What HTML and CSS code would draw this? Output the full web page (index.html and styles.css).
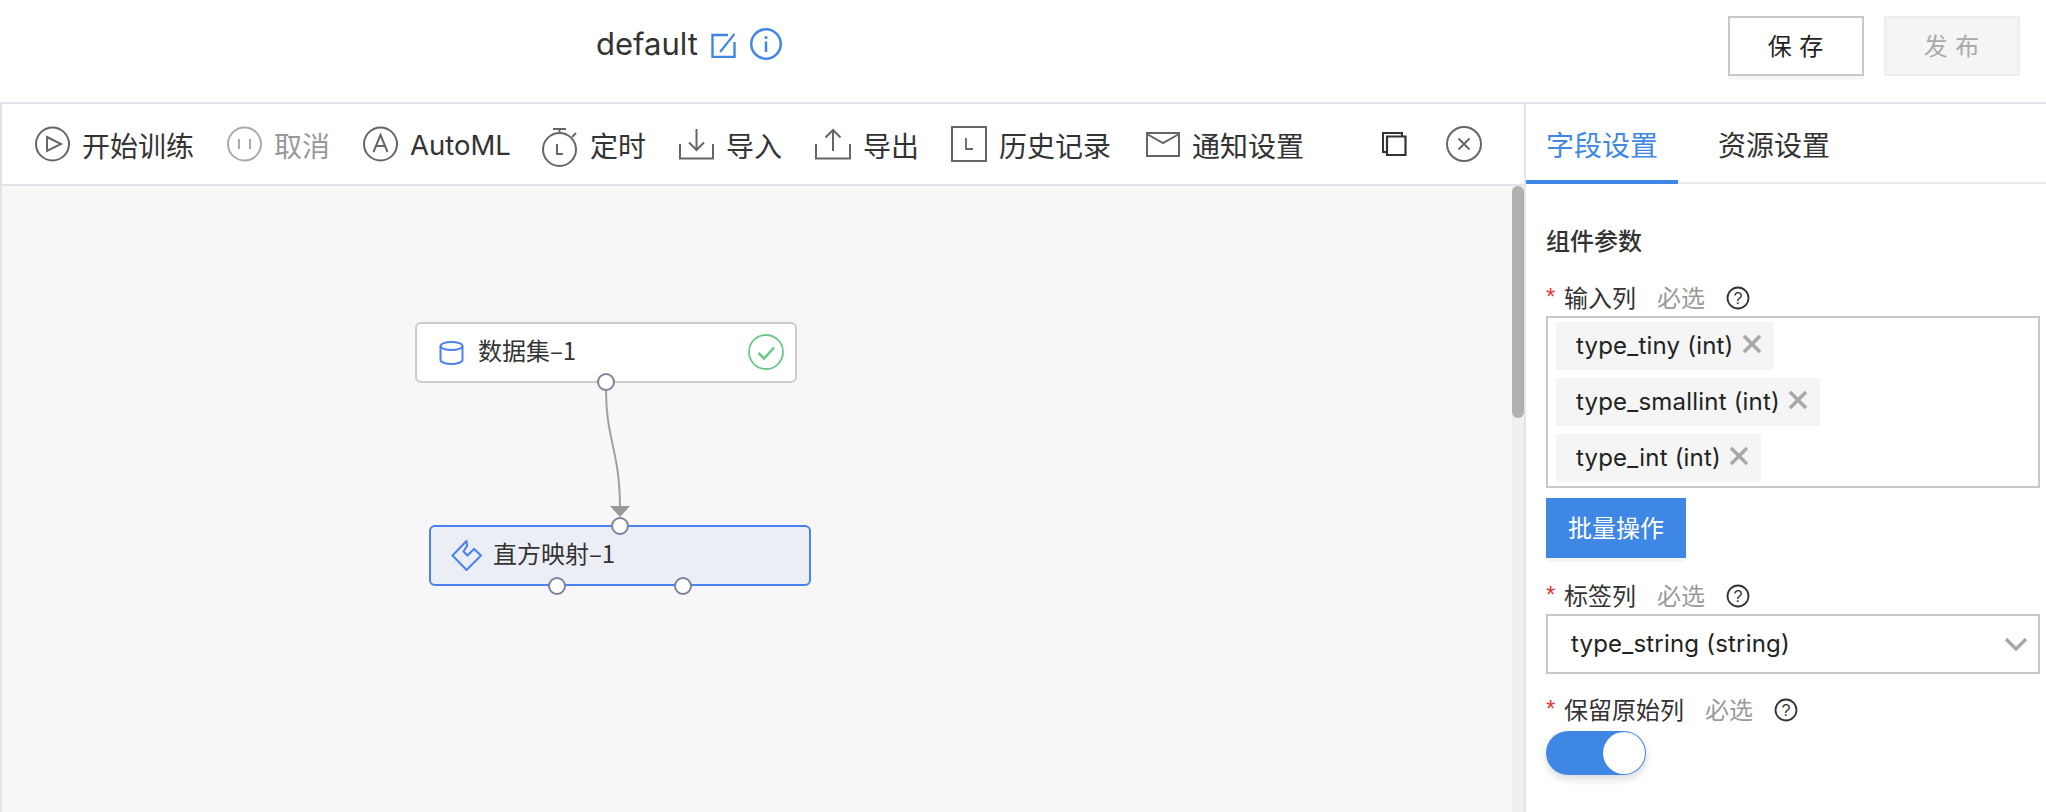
FILE: index.html
```html
<!DOCTYPE html>
<html lang="zh">
<head>
<meta charset="utf-8">
<title>default</title>
<link rel="stylesheet" href="styles.css">
</head>
<body>
<div class="page">
  <header class="header">
    <div class="title-block">
      <span class="title">default</span>
      <svg class="edit-icon" viewBox="0 0 25 25" width="25" height="25"><path d="M17 2H1.500v22h22V9" fill="none" stroke="#3f87e4" stroke-width="2.400"/><path d="M23.500 1L9 19" fill="none" stroke="#3f87e4" stroke-width="2"/></svg>
      <svg class="info-icon" viewBox="0 0 32 32" width="32" height="32"><circle cx="16" cy="16" r="14.75" fill="none" stroke="#3f87e4" stroke-width="2.5"/><circle cx="16" cy="9.5" r="1.6" fill="#3f87e4"/><path d="M16 13.5V24" stroke="#3f87e4" stroke-width="2.5"/></svg>
    </div>
    <div class="header-actions">
      <button class="btn btn-save">保 存</button>
      <button class="btn btn-publish">发 布</button>
    </div>
  </header>
  <div class="main">
    <section class="workspace">
      <div class="toolbar">
        <div class="tool">
          <svg width="35" height="36" viewBox="0 0 35 36"><circle cx="17.5" cy="18" r="16.5" class="ic"/><path d="M12 11l14 7-14 7z" class="ic"/></svg>
          <span>开始训练</span>
        </div>
        <div class="tool tool-off">
          <svg width="35" height="36" viewBox="0 0 35 36"><circle cx="17.5" cy="18" r="16.5" class="ic"/><path d="M12 13v10M23 13v10" class="ic"/></svg>
          <span>取消</span>
        </div>
        <div class="tool tool-latin">
          <svg width="35" height="36" viewBox="0 0 35 36"><circle cx="17.5" cy="18" r="16.5" class="ic"/><path d="M10.5 26L17.500 9l7 17M13 20h9" class="ic"/></svg>
          <span class="latin">AutoML</span>
        </div>
        <div class="tool">
          <svg class="tall" width="36" height="39" viewBox="0 0 36 39"><circle cx="17.500" cy="21.500" r="16.500" class="ic"/><path d="M11 1h13M17.500 1v4M30 9l4-4M15 16v10h6" class="ic"/></svg>
          <span>定时</span>
        </div>
        <div class="tool">
          <svg width="35" height="32" viewBox="0 0 35 32"><path d="M1 16v14.500h33V16M17.500 1v21M10 14.500l7.500 7.500 7.500-7.500" class="ic"/></svg>
          <span>导入</span>
        </div>
        <div class="tool tool-export">
          <svg width="36" height="32" viewBox="0 0 36 32"><path d="M1 16v14.500h34V16M18 23V2M10.500 9.500L18 2l7.500 7.500" class="ic"/></svg>
          <span>导出</span>
        </div>
        <div class="tool">
          <svg width="36" height="36" viewBox="0 0 36 36"><path d="M1 1h34v34H1z" class="ic"/><path d="M15 12v11h7" class="ic thin"/></svg>
          <span>历史记录</span>
        </div>
        <div class="tool tool-mail">
          <svg width="34" height="25" viewBox="0 0 34 25"><path d="M1 1h32v23H1zM1 2l16 9 16-9" class="ic"/></svg>
          <span>通知设置</span>
        </div>
        <div class="tool-right">
          <svg width="25" height="24" viewBox="0 0 25 24"><path d="M4 20H1V1h19v3" fill="none" stroke="#333" stroke-width="2"/><path d="M5 4.500h18.500V23H5z" fill="none" stroke="#333" stroke-width="2.200"/></svg>
          <svg class="close-icon" width="36" height="36" viewBox="0 0 36 36"><circle cx="18" cy="18" r="17" class="ic"/><path d="M12.500 12.500l11 11M23.500 12.500l-11 11" class="ic"/></svg>
        </div>
      </div>
      <div class="canvas">
        <div class="node node-data">
          <svg width="25" height="24" viewBox="0 0 25 24"><ellipse cx="12.500" cy="5" rx="11" ry="4" fill="none" stroke="#4a80f0" stroke-width="2"/><path d="M1.500 5v14c0 2 5 4 11 4s11-2 11-4V5" fill="none" stroke="#4a80f0" stroke-width="2"/></svg>
          <span class="node-label">数据集–1</span>
          <svg class="node-check" width="36" height="36" viewBox="0 0 36 36"><circle cx="18" cy="18" r="17" fill="none" stroke="#6cc887" stroke-width="1.800"/><path d="M10.500 19l5.500 5.500 10-11" fill="none" stroke="#6cc887" stroke-width="2.600"/></svg>
        </div>
        <div class="node node-hist">
          <svg width="31" height="31" viewBox="0 0 31 31"><path d="M15.500 1L1.500 15.500 15.500 30 30 15.500 23 9l-6.500 6.500-4-4L16 6z" fill="none" stroke="#4a80f0" stroke-width="2"/></svg>
          <span class="node-label">直方映射–1</span>
        </div>
        <svg class="edge" width="60" height="140" viewBox="0 0 60 140"><path d="M10 10C10 60 24 70 24 129" fill="none" stroke="#a0a0a0" stroke-width="2"/><path d="M14 126h20l-10 11z" fill="#999"/></svg>
        <span class="port port-a"></span>
        <span class="port port-b"></span>
        <span class="port port-c"></span>
        <span class="port port-d"></span>
        <div class="scrollbar"><div class="scroll-thumb"></div></div>
      </div>
    </section>
    <aside class="panel">
      <div class="tabs">
        <div class="tab tab-active">字段设置</div>
        <div class="tab">资源设置</div>
      </div>
      <div class="form">
        <h3 class="form-title">组件参数</h3>
        <div class="label"><i>*</i><span>输入列</span><em>必选</em><svg class="help" width="24" height="24" viewBox="0 0 24 24"><circle cx="12" cy="12" r="10.500" fill="none" stroke="#333" stroke-width="1.800"/><text x="12" y="17.500" text-anchor="middle" class="help-q">?</text></svg></div>
        <div class="multi">
          <div class="tag"><span>type_tiny (int)</span><svg width="20" height="20" viewBox="0 0 20 20"><path d="M2 2l16 16M18 2L2 18" stroke="#a9a9a9" stroke-width="3.500"/></svg></div>
          <div class="tag"><span>type_smallint (int)</span><svg width="20" height="20" viewBox="0 0 20 20"><path d="M2 2l16 16M18 2L2 18" stroke="#a9a9a9" stroke-width="3.500"/></svg></div>
          <div class="tag"><span>type_int (int)</span><svg width="20" height="20" viewBox="0 0 20 20"><path d="M2 2l16 16M18 2L2 18" stroke="#a9a9a9" stroke-width="3.500"/></svg></div>
        </div>
        <button class="btn-batch">批量操作</button>
        <div class="label label-second"><i>*</i><span>标签列</span><em>必选</em><svg class="help" width="24" height="24" viewBox="0 0 24 24"><circle cx="12" cy="12" r="10.500" fill="none" stroke="#333" stroke-width="1.800"/><text x="12" y="17.500" text-anchor="middle" class="help-q">?</text></svg></div>
        <div class="select"><span>type_string (string)</span><svg width="24" height="14" viewBox="0 0 24 14"><path d="M2 2l10 10L22 2" fill="none" stroke="#a9a9a9" stroke-width="3.500"/></svg></div>
        <div class="label label-third"><i>*</i><span>保留原始列</span><em>必选</em><svg class="help" width="24" height="24" viewBox="0 0 24 24"><circle cx="12" cy="12" r="10.500" fill="none" stroke="#333" stroke-width="1.800"/><text x="12" y="17.500" text-anchor="middle" class="help-q">?</text></svg></div>
        <div class="switch"><div class="knob"></div></div>
      </div>
    </aside>
  </div>
</div>
</body>
</html>
```
FILE: styles.css
```css
* { box-sizing: border-box; }
html, body { margin: 0; height: 100%; overflow: hidden; background: #fff; }
body { font-family: "Inter", "Noto Sans CJK SC", sans-serif; color: #333; }
.page { width: 2046px; height: 812px; display: flex; flex-direction: column; }

.header { height: 104px; border-bottom: 2px solid #e3e4ea; display: flex; align-items: flex-start; justify-content: space-between; padding: 16px 26px 0 596px; }
.title-block { display: flex; align-items: center; height: 56px; }
.title { font-size: 31px; color: #333; line-height: 56px; }
.edit-icon { margin-left: 13px; margin-top: 2px; }
.info-icon { margin-left: 14px; }
.header-actions { display: flex; gap: 20px; }
.btn { width: 136px; height: 60px; font: 24px/1 "Noto Sans CJK SC", sans-serif; letter-spacing: 1px; padding: 0 0 2px; border: 2px solid #c8c8c8; background: #fff; color: #222; }
.btn-save { box-shadow: 0 4px 0 #f7f7f7; }
.btn-publish { background: #f5f5f5; border-color: #eee; color: #aaa; }

.main { flex: 1; display: flex; min-height: 0; }
.workspace { width: 1524px; display: flex; flex-direction: column; border-left: 2px solid #e3e4ea; }
.toolbar { height: 82px; flex: none; border-bottom: 2px solid #e3e4ea; display: flex; align-items: center; padding-left: 33px; }
.tool { display: flex; align-items: center; gap: 12px; margin-right: 33px; font-size: 28px; font-family: "Noto Sans CJK SC", sans-serif; color: #333; line-height: 40px; }
.tool span { margin-top: 2px; }
.tool svg { flex: none; }
.tool-off { color: #999; }
.tool-off .ic { stroke: #aaa; }
.tool-latin { margin-right: 31px; }
.tool-export { margin-right: 32px; }
.tool-mail { margin-right: 0; margin-left: 2px; }
.latin { font-family: "Inter", sans-serif; font-size: 27.5px; }
.ic { fill: none; stroke: #666; stroke-width: 2; }
.ic.thin { stroke-width: 1.800; }
.tall { margin-top: 6px; }
.tool-right { margin-left: auto; display: flex; align-items: center; gap: 39px; padding-right: 42px; }

.canvas { flex: 1; position: relative; background: #f7f7f7; overflow: hidden; }
.node { position: absolute; height: 61px; width: 382px; border-radius: 6px; display: flex; align-items: center; font-size: 24px; color: #333; font-family: "Noto Sans CJK SC", sans-serif; }
.node-data { left: 413px; top: 136px; background: #fff; border: 2px solid #ccc; padding-left: 22px; }
.node-hist { left: 427px; top: 339px; background: #eceef6; border: 2px solid #4a80f0; padding-left: 20px; }
.node-label { margin-left: 14px; margin-top: -6px; }
.node-hist .node-label { margin-left: 11px; }
.node-check { position: absolute; right: 11px; top: 10px; }
.edge { position: absolute; left: 594px; top: 194px; }
.port { position: absolute; width: 18px; height: 18px; border-radius: 50%; background: #fff; border: 2px solid #7c8499; }
.port-a { left: 595px; top: 187px; }
.port-b { left: 609px; top: 331px; }
.port-c { left: 546px; top: 391px; }
.port-d { left: 672px; top: 391px; }
.scrollbar { position: absolute; right: 0; top: 0; bottom: 0; width: 12px; background: #efefef; }
.scroll-thumb { height: 232px; background: #b0b0b0; border-radius: 6px; }

.panel { width: 522px; border-left: 2px solid #e3e4ea; display: flex; flex-direction: column; }
.tabs { height: 80px; display: flex; border-bottom: 2px solid #e8e8e8; flex: none; }
.tab { width: 152px; height: 80px; line-height: 80px; text-align: center; font-size: 28px; font-family: "Noto Sans CJK SC", sans-serif; color: #333; margin-right: 21px; }
.tab + .tab { margin-right: 0; width: 150px; }
.tab-active { color: #3f87e4; border-bottom: 4px solid #3f87e4; }
.form { padding: 38px 6px 0 20px; font-family: "Noto Sans CJK SC", sans-serif; }
.form-title { margin: 0; font-size: 24px; font-weight: 500; line-height: 36px; color: #333; }
.label { display: flex; align-items: center; height: 34px; font-size: 24px; margin-top: 22px; color: #333; }
.label span, .label em { margin-top: -2px; }
.label i { color: #e5383b; font-style: normal; width: 18px; font-size: 24px; font-family: "Liberation Sans", sans-serif; margin-top: 0; }
.label em { font-style: normal; color: #999; margin-left: 21px; }
.help { margin-left: 21px; margin-top: 1px; }
.help-q { font: 16px "Liberation Sans", sans-serif; fill: #333; }
.multi { margin-top: 2px; width: 494px; height: 172px; border: 2px solid #c8c8c8; padding: 4px 0 0 8px; display: flex; flex-direction: column; align-items: flex-start; gap: 8px; }
.tag { height: 48px; background: #f5f5f5; padding: 0 12px 0 20px; display: flex; align-items: center; gap: 8px; font-family: "Inter", sans-serif; font-size: 24px; letter-spacing: .2px; color: #222; }
.tag span { margin-top: -2px; }
.tag svg { margin-top: -4px; }
.btn-batch { display: block; margin-top: 10px; width: 140px; height: 60px; border: 0; padding: 0 0 2px; background: #3f87e4; color: #fff; font: 24px/1 "Noto Sans CJK SC", sans-serif; box-shadow: 0 4px 0 #f5f5f5; }
.label-second { margin-top: 20px; }
.select { margin-top: 2px; width: 494px; height: 60px; border: 2px solid #c8c8c8; display: flex; align-items: center; justify-content: space-between; padding: 0 10px 0 23px; font-family: "Inter", sans-serif; font-size: 24px; letter-spacing: .2px; color: #222; }
.select span { margin-top: -2px; }
.label-third { margin-top: 18px; }
.switch { margin-top: 5px; width: 100px; height: 44px; border-radius: 22px; background: #3f87e4; position: relative; box-shadow: 0 4px 8px rgba(0,0,0,.15); }
.knob { position: absolute; right: 1px; top: 1px; width: 42px; height: 42px; border-radius: 50%; background: #fff; }
```
